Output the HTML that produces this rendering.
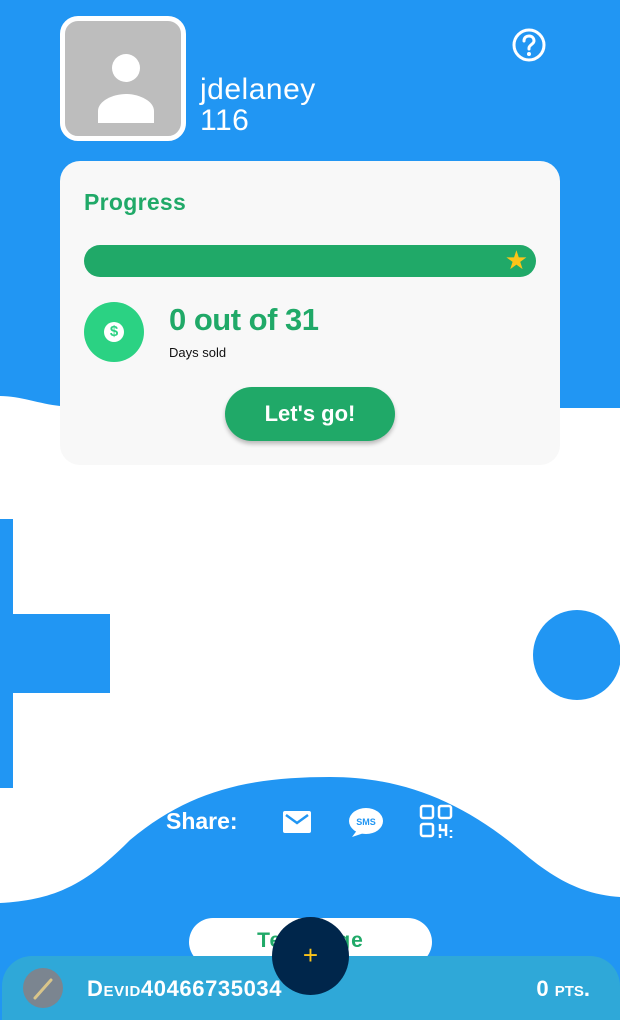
<!DOCTYPE html>
<html><head><style>
*{margin:0;padding:0;box-sizing:border-box}
body{width:620px;height:1020px;overflow:hidden;background:#fff;position:relative;font-family:"Liberation Sans",sans-serif}
.abs{position:absolute}
</style></head><body>
<svg class="abs" style="left:0;top:0" width="620" height="1020">
<path d="M0 0H620V408H560C450 408 120 410 60 406C40 404 20 396 0 396Z" fill="#2196f3"/>
<rect x="0" y="519" width="13" height="269" fill="#2196f3"/>
<rect x="0" y="614" width="110" height="79" fill="#2196f3"/>
<ellipse cx="577" cy="655" rx="44" ry="45" fill="#2196f3"/>
<path d="M0 903C60 900 90 880 130 840C190 790 250 777 330 777C400 777 460 800 520 850C560 885 590 895 620 897V1020H0Z" fill="#2196f3"/>
</svg>
<div class="abs" style="left:60px;top:16px;width:126px;height:125px;border:5px solid #fff;border-radius:18px;background:#bdbdbd">
<svg width="116" height="115" viewBox="0 0 116 115"><circle cx="61" cy="47" r="14" fill="#fff"/><path d="M33 102V90C33 80 48 73 61 73C74 73 89 80 89 90V102Z" fill="#fff"/></svg>
</div>
<div class="abs" style="left:200px;top:74px;color:#fff;font-size:30px;line-height:31px;font-weight:300;letter-spacing:0.5px">jdelaney<br>116</div>
<svg class="abs" style="left:511px;top:27px" width="36" height="36" viewBox="0 0 36 36"><circle cx="18" cy="18" r="15" fill="none" stroke="#fff" stroke-width="3"/><path d="M13 14C13 10 16 9 18 9C21 9 23 11 23 14C23 17 18 18 18 21V22" fill="none" stroke="#fff" stroke-width="3" stroke-linecap="round"/><circle cx="18" cy="27" r="2" fill="#fff"/></svg>
<div class="abs" style="left:60px;top:161px;width:500px;height:304px;background:#f8f8f8;border-radius:20px">
<div class="abs" style="left:24px;top:28px;color:#20a968;font-size:23px;font-weight:bold;letter-spacing:0.3px">Progress</div>
<div class="abs" style="left:24px;top:84px;width:452px;height:32px;background:#20a968;border-radius:16px"><span class="abs" style="right:8px;top:1px;color:#fcc419;font-size:26px;line-height:28px">★</span></div>
<div class="abs" style="left:24px;top:141px;width:60px;height:60px;border-radius:50%;background:#2bd283"><div class="abs" style="left:20px;top:20px;width:20px;height:20px;border-radius:50%;background:#fff;color:#2bd283;font-size:15px;font-weight:bold;text-align:center;line-height:20px">$</div></div>
<div class="abs" style="left:109px;top:141px;color:#20a968;font-size:31px;font-weight:900;letter-spacing:-0.5px">0 out of 31</div>
<div class="abs" style="left:109px;top:184px;color:#111;font-size:13px">Days sold</div>
<div class="abs" style="left:165px;top:226px;width:170px;height:54px;background:#20a968;border-radius:27px;box-shadow:0 3px 4px rgba(0,0,0,.25);color:#fff;font-size:22px;font-weight:bold;text-align:center;line-height:54px">Let's go!</div>
</div>
<div class="abs" style="left:166px;top:808px;color:#fff;font-size:23px;font-weight:bold">Share:</div>
<svg class="abs" style="left:283px;top:811px" width="28" height="22" viewBox="0 0 28 22"><rect x="0" y="0" width="28" height="22" rx="2" fill="#fff"/><path d="M3 4L14 12L25 4" fill="none" stroke="#2196f3" stroke-width="2.5"/></svg>
<svg class="abs" style="left:348px;top:807px" width="36" height="32" viewBox="0 0 36 32"><ellipse cx="18" cy="14" rx="17" ry="13" fill="#fff"/><path d="M4 30L10 22L16 26Z" fill="#fff"/><text x="18" y="18" fill="#2196f3" font-size="9" font-weight="bold" text-anchor="middle" font-family="Liberation Sans">SMS</text></svg>
<svg class="abs" style="left:419px;top:804px" width="36" height="36" viewBox="0 0 36 36" fill="none" stroke="#fff" stroke-width="2.5"><rect x="2" y="2" width="12" height="12" rx="2"/><rect x="20" y="2" width="12" height="12" rx="2"/><rect x="2" y="20" width="12" height="12" rx="2"/><path d="M21 20V26H27M27 20V32M21 30V34M32 26V28M32 32V34"/></svg>
<div class="abs" style="left:189px;top:918px;width:243px;height:48px;background:#fff;border-radius:24px;color:#20a968;font-size:21px;font-weight:bold;text-align:center;line-height:46px;letter-spacing:1px">Text Page</div>
<div class="abs" style="left:2px;top:956px;width:618px;height:64px;background:#2fa8d8;border-radius:30px 30px 0 0">
<div class="abs" style="left:21px;top:12px;width:40px;height:40px;border-radius:50%;background:#7b8590"><svg width="40" height="40"><path d="M12 30L28 12" stroke="#d9c58a" stroke-width="3" stroke-linecap="round"/></svg></div>
<div class="abs" style="left:85px;top:20px;color:#fff;font-size:22px;font-weight:bold;font-variant:small-caps;letter-spacing:0.6px">Devid40466735034</div>
<div class="abs" style="right:30px;top:20px;color:#fff;font-size:22px;font-weight:bold;font-variant:small-caps">0 pts.</div>
</div>
<div class="abs" style="left:272px;top:917px;width:77px;height:78px;border-radius:50%;background:#00264b;color:#fcc419;font-size:26px;text-align:center;line-height:76px">+</div>
</body></html>
